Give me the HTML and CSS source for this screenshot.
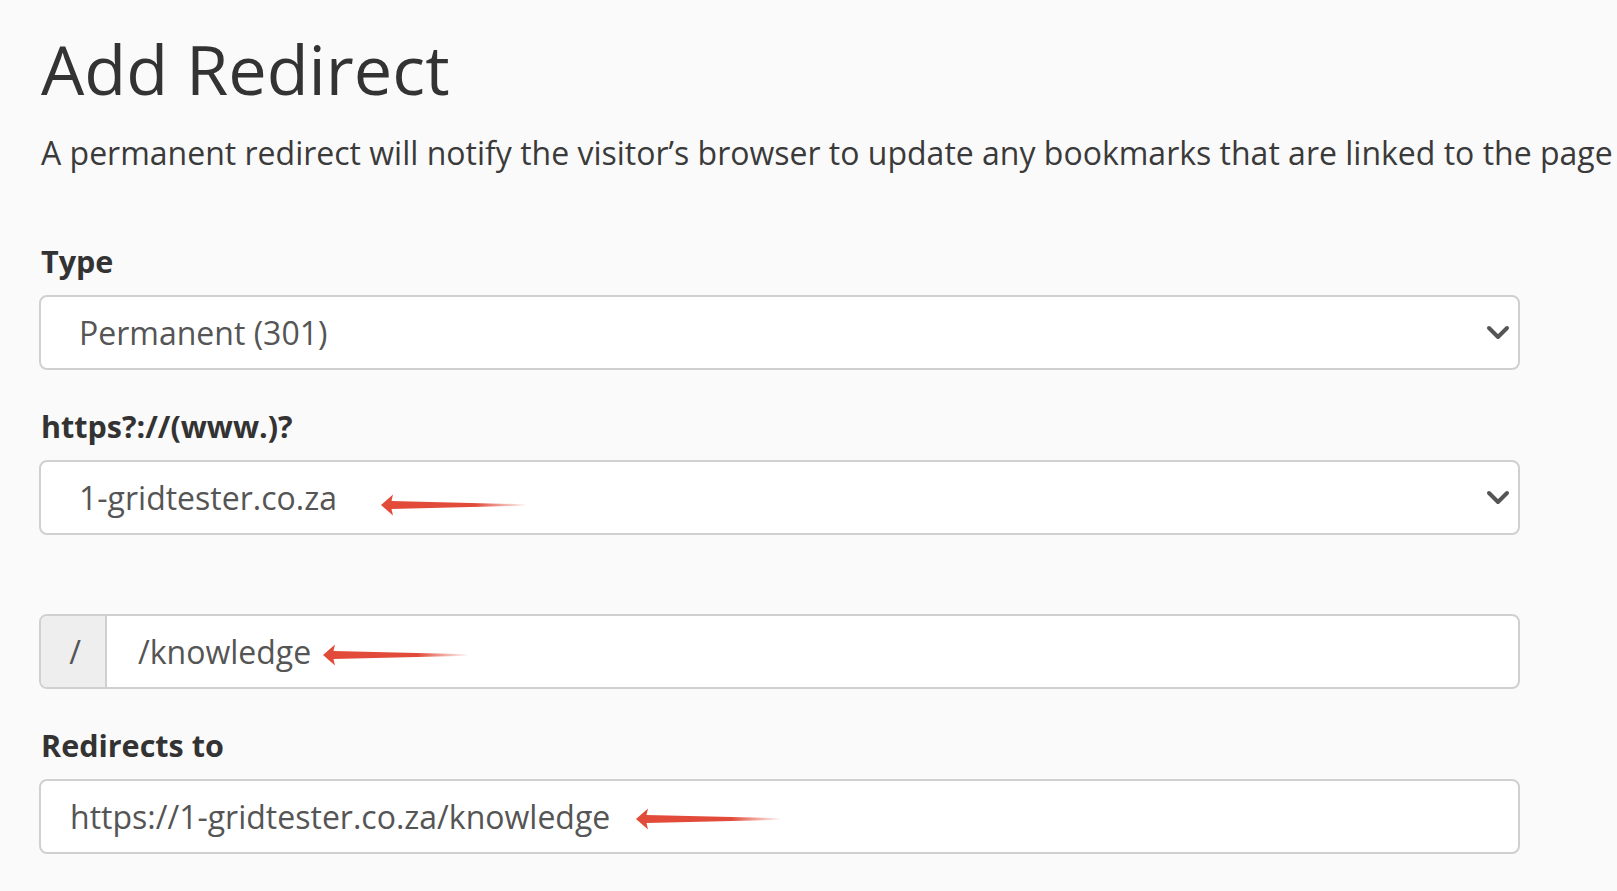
FILE: index.html
```html
<!DOCTYPE html>
<html lang="en">
<head>
<meta charset="utf-8">
<title>Add Redirect</title>
<link rel="stylesheet" href="styles.css">
</head>
<body>
<div class="page">
  <h1 class="title">Add Redirect</h1>
  <p class="lead">A permanent redirect will notify the visitor’s browser to update any bookmarks that are linked to the page</p>
  <form class="form">
    <div class="group">
      <label class="label">Type</label>
      <div class="control select">
        <span class="value value-select">Permanent (301)</span>
        <svg class="chevron" width="24" height="16" viewBox="0 0 24 16"><polyline points="3,3 12,12 21,3" fill="none" stroke="#555" stroke-width="4" stroke-linecap="round" stroke-linejoin="round"/></svg>
      </div>
    </div>
    <div class="group group-wide">
      <label class="label">https?://(www.)?</label>
      <div class="control select">
        <span class="value value-select">1-gridtester.co.za</span>
        <svg class="arrow arrow-a" width="146" height="24" viewBox="0 0 146 24"><defs><linearGradient id="ga" gradientUnits="userSpaceOnUse" x1="0" y1="0" x2="146" y2="0"><stop offset="0" stop-color="#e24b3a"/><stop offset="0.65" stop-color="#e24b3a"/><stop offset="1" stop-color="#e24b3a" stop-opacity="0"/></linearGradient></defs><path d="M0 12 L12 1.5 L10.5 8 L146 11.3 L146 12.7 L10.5 16 L12 22.5 Z" fill="url(#ga)"/></svg>
        <svg class="chevron" width="24" height="16" viewBox="0 0 24 16"><polyline points="3,3 12,12 21,3" fill="none" stroke="#555" stroke-width="4" stroke-linecap="round" stroke-linejoin="round"/></svg>
      </div>
    </div>
    <div class="group">
      <div class="input-group">
        <span class="addon">/</span>
        <div class="control-inner">
          <span class="value value-input">/knowledge</span>
          <svg class="arrow arrow-b" width="146" height="24" viewBox="0 0 146 24"><defs><linearGradient id="gb" gradientUnits="userSpaceOnUse" x1="0" y1="0" x2="146" y2="0"><stop offset="0" stop-color="#e24b3a"/><stop offset="0.65" stop-color="#e24b3a"/><stop offset="1" stop-color="#e24b3a" stop-opacity="0"/></linearGradient></defs><path d="M0 12 L12 1.5 L10.5 8 L146 11.3 L146 12.7 L10.5 16 L12 22.5 Z" fill="url(#gb)"/></svg>
        </div>
      </div>
    </div>
    <div class="group">
      <label class="label">Redirects to</label>
      <div class="control input">
        <span class="value value-input">https://1-gridtester.co.za/knowledge</span>
        <svg class="arrow arrow-c" width="146" height="24" viewBox="0 0 146 24"><defs><linearGradient id="gc" gradientUnits="userSpaceOnUse" x1="0" y1="0" x2="146" y2="0"><stop offset="0" stop-color="#e24b3a"/><stop offset="0.65" stop-color="#e24b3a"/><stop offset="1" stop-color="#e24b3a" stop-opacity="0"/></linearGradient></defs><path d="M0 12 L12 1.5 L10.5 8 L146 11.3 L146 12.7 L10.5 16 L12 22.5 Z" fill="url(#gc)"/></svg>
      </div>
    </div>
  </form>
</div>
</body>
</html>
```

FILE: styles.css
```css
html, body {
  margin: 0;
  padding: 0;
}
body {
  background: #fafafa;
  font-family: "Open Sans", "Noto Sans", sans-serif;
  color: #333;
  overflow: hidden;
  width: 1617px;
  height: 891px;
}
.page {
  padding-left: 41px;
}
.title {
  margin: 29px 0 0;
  font-size: 68.5px;
  font-weight: 400;
  line-height: 80px;
  color: #333;
}
.lead {
  margin: 22px 0 0;
  font-size: 32px;
  line-height: 44px;
  white-space: nowrap;
  color: #3a3a3a;
}
.form {
  margin-top: 66px;
  margin-left: -2px;
  width: 1481px;
}
.group {
  margin-bottom: 36px;
}
.group-wide {
  margin-bottom: 79px;
}
.label {
  display: block;
  font-weight: 700;
  font-size: 30.5px;
  line-height: 40px;
  margin-bottom: 14px;
  padding-left: 2px;
  color: #333;
}
.control {
  box-sizing: border-box;
  height: 75px;
  background: #fff;
  border: 2px solid #d0d0d0;
  border-radius: 8px;
  display: flex;
  align-items: center;
}
.select {
  padding: 0 8px 0 38px;
}
.input {
  padding: 0 29px;
}
.value {
  font-size: 32px;
  line-height: 44px;
  color: #555;
  white-space: nowrap;
}
.chevron {
  margin-left: auto;
  flex: none;
}
.arrow {
  flex: none;
}
.arrow-a {
  margin-left: 44px;
  margin-top: 14px;
}
.arrow-b {
  margin-left: 12px;
  margin-top: 7px;
}
.arrow-c {
  margin-left: 26px;
  margin-top: 5px;
}
.input-group {
  box-sizing: border-box;
  height: 75px;
  border: 2px solid #d0d0d0;
  border-radius: 8px;
  display: flex;
  overflow: hidden;
  background: #fff;
}
.addon {
  flex: none;
  width: 66px;
  padding-left: 4px;
  box-sizing: border-box;
  border-right: 2px solid #d0d0d0;
  background: #eee;
  display: flex;
  align-items: center;
  justify-content: center;
  font-size: 32px;
  color: #555;
}
.control-inner {
  flex: 1;
  display: flex;
  align-items: center;
  padding: 0 31px;
}
```
